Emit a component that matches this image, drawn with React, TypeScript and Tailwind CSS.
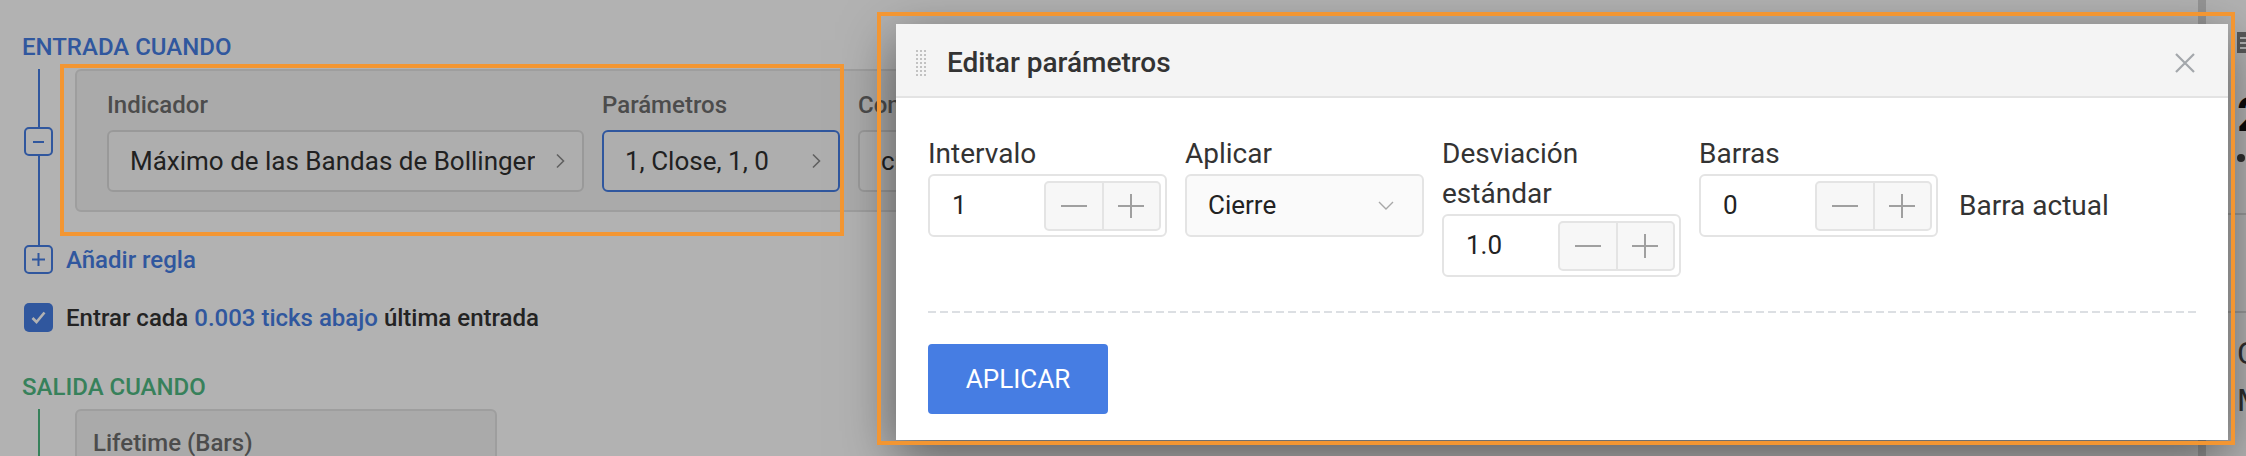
import React from 'react';

const BLUE = '#467de3';

// Chevron pointing right (rule fields)
function ChevronRight() {
    return (
        <svg width="11" height="16" viewBox="0 0 11 16" fill="none">
            <path d="M2 1.5L8.5 8L2 14.5" stroke="#8a8a8a" strokeWidth="1.6" />
        </svg>
    );
}

function RuleField({ label, value, active = false, width }: { label: string; value: string; active?: boolean; width: string }) {
    return (
        <div className={`flex flex-col ${width}`}>
            <div className="mb-[11px] text-[24px] leading-[28px] font-medium text-[#6e6e6e]">{label}</div>
            <div
                className={`flex h-[62px] items-center justify-between rounded-[6px] border-2 bg-[#f9f9f9] pl-[21px] pr-[16px] ${
                    active ? 'border-[#467de3]' : 'border-[#dcdcdc]'
                }`}>
                <span className="truncate text-[26px] text-[#303030]">{value}</span>
                <ChevronRight />
            </div>
        </div>
    );
}

function Stepper() {
    return (
        <div className="flex h-[50px] w-[117px] rounded-[5px] border-2 border-[#e4e4e4] bg-[#f7f7f7]">
            <div className="flex flex-1 items-center justify-center border-r-2 border-[#e4e4e4]">
                <span className="h-[2px] w-[26px] bg-[#a0a0a0]" />
            </div>
            <div className="flex flex-1 items-center justify-center">
                <svg width="26" height="26" viewBox="0 0 26 26">
                    <path d="M0 13H26M13 1V25" stroke="#a0a0a0" strokeWidth="2" />
                </svg>
            </div>
        </div>
    );
}

function NumberInput({ value }: { value: string }) {
    return (
        <div className="flex h-[63px] w-[239px] items-center rounded-[6px] border-2 border-[#e4e4e4] bg-white pl-[22px] pr-[4px]">
            <span className="flex-1 text-[26px] text-[#222]">{value}</span>
            <Stepper />
        </div>
    );
}

function ParamLabel({ children }: { children: React.ReactNode }) {
    return <div className="w-[239px] text-[28px] leading-[40px] text-[#333]">{children}</div>;
}

function EditParamsModal() {
    return (
        <div className="absolute left-[896px] top-[24px] z-20 w-[1332px] bg-white shadow-[0_16px_50px_rgba(0,0,0,0.5)]">
            {/* header */}
            <div className="flex h-[74px] items-center border-b-2 border-[#e3e3e3] bg-[#f4f4f4] pl-[20px] pr-[33px] pt-[6px]">
                <svg width="10" height="27" viewBox="0 0 10 27">
                    {[0, 4, 8].map((x) =>
                        [0, 4, 8, 12, 16, 20, 24].map((y) => <rect key={`${x}-${y}`} x={x} y={y} width="2" height="2" fill="#c2c2c2" />)
                    )}
                </svg>
                <div className="ml-[21px] text-[28px] font-medium text-[#333]">Editar parámetros</div>
                <svg className="ml-auto" width="20" height="20" viewBox="0 0 20 20">
                    <path d="M1 1L19 19M19 1L1 19" stroke="#a3a7ab" strokeWidth="2.2" />
                </svg>
            </div>

            {/* body */}
            <div className="px-[32px] pb-[26px] pt-[36px]">
                <div className="flex items-start gap-[18px]">
                    <div className="flex flex-col">
                        <ParamLabel>Intervalo</ParamLabel>
                        <NumberInput value="1" />
                    </div>
                    <div className="flex flex-col">
                        <ParamLabel>Aplicar</ParamLabel>
                        <div className="flex h-[63px] w-[239px] items-center justify-between rounded-[6px] border-2 border-[#e4e4e4] bg-[#fafafa] pl-[21px] pr-[28px]">
                            <span className="text-[26px] text-[#222]">Cierre</span>
                            <svg width="16" height="9" viewBox="0 0 16 9" fill="none">
                                <path d="M1 1L8 8L15 1" stroke="#a8a8a8" strokeWidth="1.4" />
                            </svg>
                        </div>
                    </div>
                    <div className="flex flex-col">
                        <ParamLabel>Desviación estándar</ParamLabel>
                        <NumberInput value="1.0" />
                    </div>
                    <div className="flex flex-col">
                        <ParamLabel>Barras</ParamLabel>
                        <div className="flex items-center gap-[21px]">
                            <NumberInput value="0" />
                            <span className="text-[28px] text-[#333]">Barra actual</span>
                        </div>
                    </div>
                </div>

                <div className="mt-[34px] h-[2px] bg-[repeating-linear-gradient(90deg,#dcdfe3_0px,#dcdfe3_8px,transparent_8px,transparent_12px)]" />

                <button className="mt-[31px] flex h-[70px] w-[180px] items-center justify-center rounded-[4px] bg-[#467de3] text-[26px] text-white">
                    APLICAR
                </button>
            </div>
        </div>
    );
}

export default function App() {
    return (
        <div className="relative flex h-[456px] w-[2246px] overflow-hidden bg-white font-['Roboto',sans-serif]">
            {/* main strategy panel */}
            <div className="flex w-[2198px] shrink-0 flex-col">
                {/* bottoms of inputs cut off at the top */}
                <div className="flex h-[3px]">
                    <div className="ml-[601px] w-[197px] rounded-b-[4px] bg-[#d8d8d8]" />
                    <div className="ml-[200px] w-[169px] rounded-b-[4px] bg-[#d8d8d8]" />
                    <div className="ml-[393px] w-[166px] rounded-b-[4px] bg-[#d8d8d8]" />
                    <div className="ml-[53px] w-[59px] rounded-b-[4px] bg-[#d8d8d8]" />
                    <div className="ml-[3px] w-[152px] rounded-b-[4px] bg-[#d8d8d8]" />
                    <div className="ml-[13px] w-[153px] rounded-b-[4px] bg-[#d8d8d8]" />
                </div>

                <div className="pl-[22px]">
                    <div className="mt-[33px] text-[24px] leading-[28px] font-medium text-[#467de3]">ENTRADA CUANDO</div>

                    {/* entry rule */}
                    <div className="mt-[8px] flex">
                        <div className="ml-[2px] flex w-[29px] flex-col items-center">
                            <div className="h-[58px] w-[2px] bg-[#467de3]" />
                            <div className="flex h-[29px] w-[29px] items-center justify-center rounded-[5px] border-2 border-[#467de3] bg-white">
                                <span className="h-[2px] w-[11px] bg-[#467de3]" />
                            </div>
                            <div className="w-[2px] flex-1 bg-[#467de3]" />
                        </div>
                        <div className="ml-[22px] pb-[33px]">
                            <div className="flex w-[1500px] gap-[18px] rounded-[6px] border-2 border-[#e2e2e2] bg-[#f4f4f4] pb-[18px] pl-[30px] pt-[20px]">
                                <RuleField label="Indicador" value="Máximo de las Bandas de Bollinger" width="w-[477px]" />
                                <RuleField label="Parámetros" value="1, Close, 1, 0" active width="w-[238px]" />
                                <RuleField label="Condición" value="cruza por encima" width="w-[238px]" />
                                <RuleField label="Valor" value="Precio" width="w-[238px]" />
                            </div>
                        </div>
                    </div>

                    <div className="flex h-[29px] items-center">
                        <div className="ml-[2px] flex h-[29px] w-[29px] items-center justify-center rounded-[5px] border-2 border-[#467de3] bg-white">
                            <svg width="13" height="13" viewBox="0 0 13 13">
                                <path d="M0 6.5H13M6.5 0V13" stroke={BLUE} strokeWidth="2" />
                            </svg>
                        </div>
                        <span className="ml-[13px] text-[24px] font-medium text-[#467de3]">Añadir regla</span>
                    </div>

                    <div className="mt-[29px] flex h-[29px] items-center">
                        <div className="ml-[2px] flex h-[29px] w-[29px] items-center justify-center rounded-[5px] bg-[#467de3]">
                            <svg width="15" height="13" viewBox="0 0 15 13" fill="none">
                                <path d="M1.5 7L5.5 11L13.5 1.5" stroke="white" strokeWidth="2.6" />
                            </svg>
                        </div>
                        <span className="ml-[13px] text-[24px] font-medium text-[#333]">
                            Entrar cada <span className="text-[#467de3]">0.003 ticks abajo</span> última entrada
                        </span>
                    </div>

                    <div className="mt-[41px] text-[24px] leading-[28px] font-medium text-[#50b983]">SALIDA CUANDO</div>

                    {/* exit rule */}
                    <div className="mt-[8px] flex">
                        <div className="ml-[2px] flex w-[29px] justify-center">
                            <div className="w-[2px] bg-[#50b983]" />
                        </div>
                        <div className="ml-[22px] h-[120px] w-[422px] rounded-[6px] border-2 border-[#e2e2e2] bg-[#f4f4f4] pl-[16px] pt-[18px]">
                            <div className="text-[24px] leading-[28px] font-medium text-[#6e6e6e]">Lifetime (Bars)</div>
                        </div>
                    </div>
                </div>
            </div>

            {/* right side panel, mostly hidden behind the dialog */}
            <div className="flex flex-1 flex-col border-l-[8px] border-[#d6d6d6] pl-[31px] pt-[32px]">
                <div className="flex h-[21px] w-[22px] flex-col justify-center gap-[3px] bg-[#808080] px-[3px]">
                    <span className="h-[2px] bg-white" />
                    <span className="h-[2px] bg-white" />
                    <span className="h-[2px] bg-white" />
                </div>
                <div className="mt-[38px] text-[48px] leading-[48px] font-bold text-[#111]">2</div>
                <div className="mt-[15px] h-[8px] w-[8px] rounded-full bg-[#444]" />
                <div className="-ml-[31px] mt-[51px] border-b-2 border-[#dcdcdc]" />
                <div className="-ml-[31px] mt-[96px] border-b-2 border-[#dcdcdc]" />
                <div className="mt-[24px] text-[32px] leading-[32px] text-[#444]">C</div>
                <div className="mt-[15px] text-[32px] leading-[32px] text-[#444]">M</div>
            </div>

            {/* modal backdrop */}
            <div className="absolute inset-0 z-10 bg-black/30" />

            <EditParamsModal />

            {/* highlight annotations */}
            <div className="pointer-events-none absolute left-[60px] top-[64px] z-30 h-[172px] w-[784px] border-4 border-[#f39632]" />
            <div className="pointer-events-none absolute left-[877px] top-[12px] z-30 h-[433px] w-[1358px] border-4 border-[#f39632]" />
        </div>
    );
}
